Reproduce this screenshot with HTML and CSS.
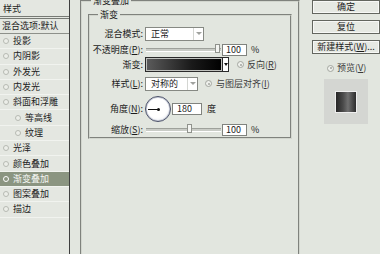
FILE: index.html
```html
<!DOCTYPE html>
<html lang="zh-CN">
<head>
  <meta charset="UTF-8" />
  <title>图层样式 - 渐变叠加</title>
  <link rel="stylesheet" href="styles.css">
</head>
<body>
  <div class="dialog">

    <!-- Style list -->
    <aside class="styles-list">
      <div class="list-head">样式</div>
      <div class="list-blend">混合选项:默认</div>
      <ul class="effects">
        <li><span class="dot"></span>投影</li>
        <li><span class="dot"></span>内阴影</li>
        <li><span class="dot"></span>外发光</li>
        <li><span class="dot"></span>内发光</li>
        <li><span class="dot"></span>斜面和浮雕</li>
        <li class="sub"><span class="dot"></span>等高线</li>
        <li class="sub"><span class="dot"></span>纹理</li>
        <li><span class="dot"></span>光泽</li>
        <li><span class="dot"></span>颜色叠加</li>
        <li class="active"><span class="dot"></span>渐变叠加</li>
        <li><span class="dot"></span>图案叠加</li>
        <li><span class="dot"></span>描边</li>
      </ul>
    </aside>

    <!-- Gradient overlay options -->
    <main class="panel">
      <fieldset class="group outer">
        <legend>渐变叠加</legend>
        <fieldset class="group inner">
          <legend>渐变</legend>

          <div class="row r-blend">
            <span class="lbl">混合模式:</span>
            <div class="select w-blend"><span>正常</span><i class="caret"></i></div>
          </div>

          <div class="row r-opacity">
            <span class="lbl">不透明度(<u>P</u>):</span>
            <div class="slider"><span class="thumb" style="left: 69px"></span></div>
            <div class="field w-num">100</div>
            <span class="unit">%</span>
          </div>

          <div class="row r-gradient">
            <span class="lbl">渐变:</span>
            <div class="swatch"></div>
            <div class="swatch-btn"><i class="caret dark"></i></div>
            <span class="check"></span>
            <span class="check-text">反向(<u>R</u>)</span>
          </div>

          <div class="row r-style">
            <span class="lbl">样式(<u>L</u>):</span>
            <div class="select w-style"><span>对称的</span><i class="caret"></i></div>
            <span class="check"></span>
            <span class="check-text">与图层对齐(<u>I</u>)</span>
          </div>

          <div class="row r-angle">
            <span class="lbl">角度(<u>N</u>):</span>
            <div class="dial"><span class="hand"></span><span class="pin"></span></div>
            <div class="field w-angle">180</div>
            <span class="unit deg">度</span>
          </div>

          <div class="row r-scale">
            <span class="lbl">缩放(<u>S</u>):</span>
            <div class="slider"><span class="thumb" style="left: 41px"></span></div>
            <div class="field w-num">100</div>
            <span class="unit">%</span>
          </div>

        </fieldset>
      </fieldset>
    </main>

    <!-- Buttons and preview -->
    <div class="side">
      <div class="btn">确定</div>
      <div class="btn">复位</div>
      <div class="btn">新建样式(<u>W</u>)...</div>
      <div class="preview-toggle">
        <span class="check"></span>
        <span class="check-text">预览(<u>V</u>)</span>
      </div>
      <div class="preview-box">
        <div class="preview-square"></div>
      </div>
    </div>

  </div>
</body>
</html>
```

FILE: styles.css
```css
/* General */
body {
  margin: 0;
  background-color: #e2e6df;
  font-family: "Noto Sans CJK SC", "Noto Sans", sans-serif;
  font-size: 9px;
  line-height: 12px;
  color: #1c1c1c;
}

u {
  text-decoration: underline;
  text-underline-offset: 1px;
}

.dialog {
  display: flex;
  width: 380px;
  height: 254px;
  overflow: hidden;
}

/* Style list */
.styles-list {
  width: 69px;
  flex-shrink: 0;
  border-right: 1px solid #3e3e3e;
  background-color: #e4e7e1;
}

.list-head {
  height: 16px;
  line-height: 18px;
  padding-left: 3px;
  border-bottom: 3px double #777a75;
}

.list-blend {
  height: 14px;
  line-height: 13px;
  padding-left: 2px;
  border-bottom: 1px solid #8d908a;
  white-space: nowrap;
}

.effects {
  list-style: none;
  margin: 0;
  padding: 0;
}

.effects li {
  box-sizing: border-box;
  height: 15.3px;
  display: flex;
  align-items: center;
  padding-left: 3px;
  border-bottom: 1px solid #f1f3ef;
  white-space: nowrap;
}

.effects li.sub {
  padding-left: 15px;
}

.effects li.active {
  background-color: #8b9581;
  color: #f4f5f2;
}

.dot {
  box-sizing: border-box;
  width: 6px;
  height: 6px;
  margin-right: 4px;
  border: 1px solid #b6bab2;
  border-radius: 50%;
  background-color: #eceee9;
}

.effects li.active .dot {
  border: 1.5px solid #ffffff;
  background-color: transparent;
}

/* Group boxes */
.panel {
  width: 220px;
  flex-shrink: 0;
  margin-left: 10px;
}

.group {
  margin: 0;
  border: 2px groove #d2d6ce;
}

.group legend {
  padding: 0 2px;
  line-height: 12px;
}

.outer {
  height: 290px;
  margin-top: -5px;
  padding: 0 6px;
}

.outer > legend {
  margin-left: 3px;
}

.inner {
  margin-top: 2px;
  padding: 4px 0 0 0;
}

.inner > legend {
  margin-left: 8px;
}

/* Option rows */
.row {
  display: flex;
  align-items: center;
  white-space: nowrap;
}

.r-blend { height: 18px; }
.r-opacity { height: 14px; }
.r-gradient { height: 15px; }
.r-style { height: 23px; }
.r-angle { height: 28px; }
.r-scale { height: 14px; }

.lbl {
  width: 53px;
  margin-right: 2px;
  text-align: right;
}

.select {
  box-sizing: border-box;
  display: flex;
  height: 14px;
  border: 1px solid #868983;
  background-color: #ffffff;
}

.select span {
  flex: 1;
  padding-left: 5px;
  line-height: 12px;
}

.w-blend { width: 59px; }
.w-style { width: 53px; }

.caret {
  width: 9px;
  border-left: 1px solid #d4d6d2;
  position: relative;
}

.caret::after {
  content: "";
  position: absolute;
  left: 2px;
  top: 4px;
  border-left: 3px solid transparent;
  border-right: 3px solid transparent;
  border-top: 3px solid #a0a29e;
}

.caret.dark {
  border-left: none;
  width: 100%;
}

.caret.dark::after {
  left: 1px;
  top: 5px;
  border-left-width: 2px;
  border-right-width: 2px;
  border-top-color: #111111;
}

.field {
  box-sizing: border-box;
  height: 12px;
  margin-left: 1px;
  padding-left: 3px;
  border: 1px solid #80837e;
  background-color: #ffffff;
  line-height: 10px;
}

.w-num { width: 25px; }

.w-angle {
  width: 30px;
  margin-left: 1px;
  padding-left: 4px;
}

.unit {
  margin-left: 4px;
}

.unit.deg {
  margin-left: 5px;
}

/* Sliders */
.slider {
  position: relative;
  width: 75px;
  height: 2px;
  margin-left: 1px;
  border-top: 1px solid #9ea19b;
  border-bottom: 1px solid #ffffff;
  background-color: #c9ccc6;
}

.thumb {
  position: absolute;
  top: -5px;
  box-sizing: border-box;
  width: 5px;
  height: 9px;
  border: 1px solid #8f928c;
  background-color: #f4f5f2;
}

/* Gradient picker */
.swatch {
  box-sizing: border-box;
  width: 78px;
  height: 15px;
  border: 1px solid #2a2a2a;
  box-shadow: inset 0 0 0 1px #bfc1bd;
  background: linear-gradient(to right, #5c5c5c, #1a1a1a 60%, #000000);
}

.swatch-btn {
  box-sizing: border-box;
  width: 6px;
  height: 15px;
  border: 1px solid #2a2a2a;
  border-left: none;
  background-color: #ffffff;
}

.check {
  box-sizing: border-box;
  position: relative;
  width: 7px;
  height: 7px;
  margin-left: 8px;
  border: 1px solid #a3a6a0;
  border-radius: 50%;
  background-color: #eef0ec;
}

.check::after {
  content: "";
  position: absolute;
  left: 1.5px;
  top: 1.5px;
  width: 2px;
  height: 2px;
  border-radius: 50%;
  background-color: #a3a6a0;
}

.check-text {
  margin-left: 3px;
  color: #3a3a3a;
}

.r-style .check {
  margin-left: 7px;
}

.r-style .check-text {
  margin-left: 4px;
}

/* Angle dial */
.dial {
  position: relative;
  box-sizing: border-box;
  width: 26px;
  height: 26px;
  border: 1px solid #4a5068;
  border-radius: 50%;
  background: radial-gradient(circle at 45% 40%, #ffffff 55%, #dfe2ea);
  box-shadow: inset 0 0 0 1px #c8ccd8;
}

.hand {
  position: absolute;
  left: 2px;
  top: 12px;
  width: 10px;
  height: 1px;
  background-color: #111111;
}

.pin {
  position: absolute;
  left: 11px;
  top: 11px;
  width: 3px;
  height: 3px;
  border-radius: 50%;
  background-color: #111111;
}

/* Right column */
.side {
  width: 68px;
  flex-shrink: 0;
  margin-left: 12px;
  display: flex;
  flex-direction: column;
}

.btn {
  box-sizing: border-box;
  height: 14px;
  margin-bottom: 6px;
  border: 1px solid #63665f;
  box-shadow: inset 0 0 0 1px #f7f8f6;
  background-color: #e6e9e3;
  text-align: center;
  line-height: 12px;
  white-space: nowrap;
}

.preview-toggle {
  display: flex;
  align-items: center;
  height: 12px;
  margin-top: 2px;
  padding-left: 7px;
}

.preview-box {
  display: flex;
  align-items: center;
  justify-content: center;
  width: 44px;
  height: 45px;
  margin-top: 5px;
  margin-left: 12px;
  background-color: #d4d6d2;
}

.preview-square {
  box-sizing: border-box;
  width: 22px;
  height: 22px;
  border: 1px solid #eeeeee;
  background: linear-gradient(to right, #262626, #4a4a4a 35%, #707070 60%, #2c2c2c);
}
```
